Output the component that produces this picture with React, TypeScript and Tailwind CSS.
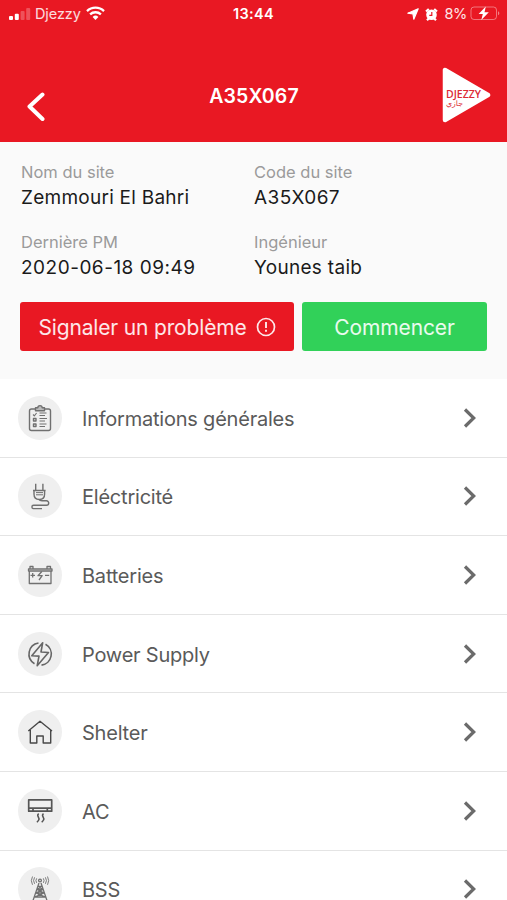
import type { ReactNode } from "react";

function StatusBar() {
  return (
    <div className="flex h-7 items-center pl-[9px] pr-[6px] text-white">
      <div className="flex flex-1 items-center">
        <svg width="22" height="12" viewBox="0 0 22 12" fill="currentColor" className="mb-px">
          <rect x="0" y="8" width="4" height="4" rx="1" />
          <rect x="5.8" y="5.8" width="4" height="6.2" rx="1" />
          <rect x="11.6" y="3" width="4" height="9" rx="1" opacity="0.25" />
          <rect x="17.2" y="0" width="4" height="12" rx="1" opacity="0.25" />
        </svg>
        <span className="ml-1 text-[14.5px] leading-none tracking-[-0.1px] text-white/85">Djezzy</span>
        <svg width="19" height="14" viewBox="0 0 19 14" fill="none" stroke="currentColor" strokeWidth="2.3" className="mb-[3px] ml-[5px]">
          <path d="M1 5.1a12.2 12.2 0 0 1 17 0" />
          <path d="M4.1 8.4a7.8 7.8 0 0 1 10.8 0" />
          <path d="M6.6 10.9a4.2 4.2 0 0 1 5.8 0L9.5 13.9Z" fill="currentColor" stroke="none" />
        </svg>
      </div>
      <span className="mr-[3px] text-[14.5px] font-semibold leading-none tracking-[0.3px]">13:44</span>
      <div className="flex flex-1 items-center justify-end">
        <svg width="12" height="12" viewBox="0 0 12 12" fill="currentColor" className="mr-[6px]">
          <path d="M11.2 0.8 6.8 11.2 6 6 0.8 5.2Z" stroke="currentColor" strokeWidth="1.2" strokeLinejoin="round" />
        </svg>
        <svg width="13" height="13" viewBox="0 0 13 13" fill="none" className="mr-[6px]">
          <circle cx="6.5" cy="6.8" r="5.3" fill="currentColor" />
          <path d="M1 3.5 3.8 1M12 3.5 9.2 1M2 12.2l2-2M11 12.2l-2-2" stroke="currentColor" strokeWidth="2.2" />
          <path d="M6.8 4v3.300H4.300" stroke="#e91823" strokeWidth="1.2" />
        </svg>
        <span className="text-[14.5px] leading-none tracking-[-0.3px] text-white/90">8%</span>
        <svg width="31" height="15" viewBox="0 0 31 15" fill="none" className="mb-px ml-[3px]">
          <rect x="1" y="1" width="25.5" height="12.5" rx="3" stroke="#fff" strokeOpacity="0.4" />
          <path d="M28 5.2c1.8.6 1.8 3.5 0 4.1Z" fill="#fff" fillOpacity="0.45" />
          <path d="M15.8.5 8.6 8h4.2l-1.5 6L18.8 6.3h-4.3Z" fill="#fff" />
        </svg>
      </div>
    </div>
  );
}

function Logo() {
  return (
    <svg width="50" height="56" viewBox="0 0 50 56">
      <path d="M3 3v50L46 28Z" fill="#fff" stroke="#fff" strokeWidth="4.5" strokeLinejoin="round" />
      <text x="4" y="31" fontSize="10" textLength="35" lengthAdjust="spacingAndGlyphs" fontWeight="600" fill="#dc2a35" fontFamily="Open Sans, sans-serif">
        DJEZZY
      </text>
      <text x="4" y="38.5" fontSize="7.5" textLength="17" lengthAdjust="spacingAndGlyphs" fill="#dc2a35" fontFamily="DejaVu Sans, sans-serif">
        جازي
      </text>
    </svg>
  );
}

// Row icons, all drawn on a 44x44 box
const iconInfo = (
  <g strokeWidth="1.4">
    <path d="M17.5 13h-4a2 2 0 0 0-2 2v17.5a2 2 0 0 0 2 2h17a2 2 0 0 0 2-2V15a2 2 0 0 0-2-2h-4" />
    <path d="M17.5 11.8h2.3a2.2 2.2 0 0 1 4.4 0h2.3v3h-9Z" fill="#bbb" />
    <path d="m15 18.5 1.3 1.3 2.3-2.8M21.5 17h7M21.5 19.5h5.5M21.5 22.5h7.5M21.5 25h5.5M21.5 28h7M21.5 30.5h5.5" strokeWidth="1.1" />
    <path d="M15.5 22.5H18V25h-2.5ZM15.5 28H18v2.5h-2.5Z" />
  </g>
);

const iconPlug = (
  <g strokeWidth="1.4">
    <path d="M17.7 9.7v6.5M24.9 9.7v6.5M15 16.5h12.6M16 16.5V20c0 3.5 2.3 5.5 5.3 5.5s5.3-2 5.3-5.5v-3.5" />
    <path d="M18 18.6h7M18 20.8h7" strokeWidth="1" />
    <path d="M21.3 25.5c.3 1.2 1.5 1.3 2.7 1.3h4.5a2.2 2.2 0 0 1 0 4.4H15.600a1.7 1.7 0 0 0 0 3.4H24" />
  </g>
);

const iconBattery = (
  <g strokeWidth="1.3">
    <path d="M11.3 18v12.5H33V18M10.5 16H34v2H10.5ZM12 16v-2.500h3V16M29 16v-2.500h3.500V16" />
    <path d="M12.5 22.3H17M14.7 20v4.6M27 22.3h4.2M23.8 18.5 20 22.7h4.2L21 27" />
  </g>
);

const iconPower = (
  <g strokeWidth="1.6" stroke="#666">
    <path d="M20.5 11a11.2 11.2 0 0 0-4 20.700M27.500 12.200a11.2 11.2 0 0 1-4 20.900" />
    <path d="M24.7 10.7 13.8 23.8l7.2.3-1.8 9.6 11.3-13.2-7.500-.5Z" />
  </g>
);

const iconHouse = (
  <g strokeWidth="1.4" stroke="#484848">
    <path d="M10.3 21 22 11.3 34 21M12.3 20v13h6.500v-7h6.400v7h7.500V20" />
  </g>
);

const iconAc = (
  <g strokeWidth="1.7" stroke="#555">
    <path d="M10.7 10.9h23v11.3h-23ZM10.7 19.2h23M15 19.2v3M29.3 19.2v3" />
    <path d="M20.7 24.7c-3.2 2.3 1.7 3.8 0 6.3-.4.8-.9 1.5-1.8 2.3M25.5 24.7c-3.2 2.3 1.7 3.8 0 6.3-.4.8-.9 1.5-1.8 2.3" strokeWidth="1.5" />
  </g>
);

const iconTower = (
  <g strokeWidth="1.3">
    <circle cx="22" cy="13.5" r="1.4" />
    <path d="M18.7 11.3a4 4 0 0 0 0 4.6M16.6 10.3a6 6 0 0 0 0 6.5M14.5 9.5a8.5 8.5 0 0 0 0 8.3M25.3 11.3a4 4 0 0 1 0 4.6M27.4 10.3a6 6 0 0 1 0 6.5M29.5 9.5a8.5 8.5 0 0 1 0 8.3" strokeWidth="0.9" />
    <path d="m21 16-6.5 19M23 16l6.5 19M20 19.5h4M19 22.5h6M17.8 26h8.4M16.5 30h11M20.5 19.5l4.5 3-7.2 3.5 9.7 4M23.5 19.5l-4.500 3 7.2 3.5-9.7 4" />
  </g>
);

const rows: { label: string; icon: ReactNode }[] = [
  { label: "Informations générales", icon: iconInfo },
  { label: "Eléctricité", icon: iconPlug },
  { label: "Batteries", icon: iconBattery },
  { label: "Power Supply", icon: iconPower },
  { label: "Shelter", icon: iconHouse },
  { label: "AC", icon: iconAc },
  { label: "BSS", icon: iconTower },
];

function Field({ label, value, spacing = "tracking-[0.3px]" }: { label: string; value: string; spacing?: string }) {
  return (
    <div>
      <div className="text-[16.5px] leading-5 text-[#9b9b9b]">{label}</div>
      <div className={`mt-1 text-[19px] leading-6 text-[#1a1a1a] ${spacing}`}>{value}</div>
    </div>
  );
}

export default function App() {
  return (
    <div className="h-[900px] w-full overflow-hidden bg-white font-[Inter,sans-serif]">
      <header className="h-[142px] bg-[#e91823]">
        <StatusBar />
        <div className="flex h-[114px] items-center justify-between pl-[26px] pr-[15px]">
          <button className="mt-[43px] w-[40px]" aria-label="Retour">
            <svg width="20" height="30" viewBox="0 0 20 30" fill="none" stroke="#fff" strokeWidth="4" strokeLinecap="round" strokeLinejoin="round">
              <path d="M16.5 2.5 3.5 14.5l13 12.5" />
            </svg>
          </button>
          <h1 className="mt-6 text-[19.5px] font-semibold tracking-[0.1px] text-white">A35X067</h1>
          <div className="mt-5">
            <Logo />
          </div>
        </div>
      </header>

      {/* Site details + actions */}
      <section className="h-[237px] bg-[#fafafa] px-5 pt-5">
        <div className="grid grid-cols-2 gap-y-[22px] pl-px">
          <Field label="Nom du site" value="Zemmouri El Bahri" spacing="tracking-[0.25px]" />
          <Field label="Code du site" value="A35X067" spacing="tracking-[0.4px]" />
          <Field label="Dernière PM" value="2020-06-18 09:49" spacing="tracking-[0.5px]" />
          <Field label="Ingénieur" value="Younes taib" />
        </div>
        <div className="mt-[22px] flex gap-2">
          <button className="flex h-[49px] w-[274px] items-center justify-center gap-[9px] rounded-[3px] bg-[#e91823] pt-[2px] text-[21px] tracking-[-0.16px] text-white/90">
            Signaler un problème
            <svg width="20" height="20" viewBox="0 0 20 20" fill="none" stroke="currentColor" strokeWidth="1.7" className="mb-[2px]">
              <circle cx="10" cy="10" r="8.5" />
              <path d="M10 5v6M10 12.8v2" strokeWidth="1.9" />
            </svg>
          </button>
          <button className="h-[49px] flex-1 rounded-[3px] bg-[#31d159] pt-[2px] text-[21px] tracking-[-0.1px] text-white/90">Commencer</button>
        </div>
      </section>

      <ul>
        {rows.map((row) => (
          <li key={row.label} className="flex h-[78.6px] items-center border-b border-[#e4e4e4] pl-[18px] pr-[30px]">
            <span className="size-11 rounded-full bg-[#efefef]">
              <svg width="44" height="44" viewBox="0 0 44 44" fill="none" stroke="#707070" strokeLinejoin="round">
                {row.icon}
              </svg>
            </span>
            <span className="ml-5 flex-1 pt-[2px] text-[20px] leading-6 tracking-[-0.22px] text-[#5a5a5a]">{row.label}</span>
            <svg width="14" height="22" viewBox="0 0 14 22" fill="none" stroke="#6b6b6b" strokeWidth="3.2">
              <path d="m2 2.5 8.7 8.5L2 19.5" />
            </svg>
          </li>
        ))}
      </ul>
    </div>
  );
}
